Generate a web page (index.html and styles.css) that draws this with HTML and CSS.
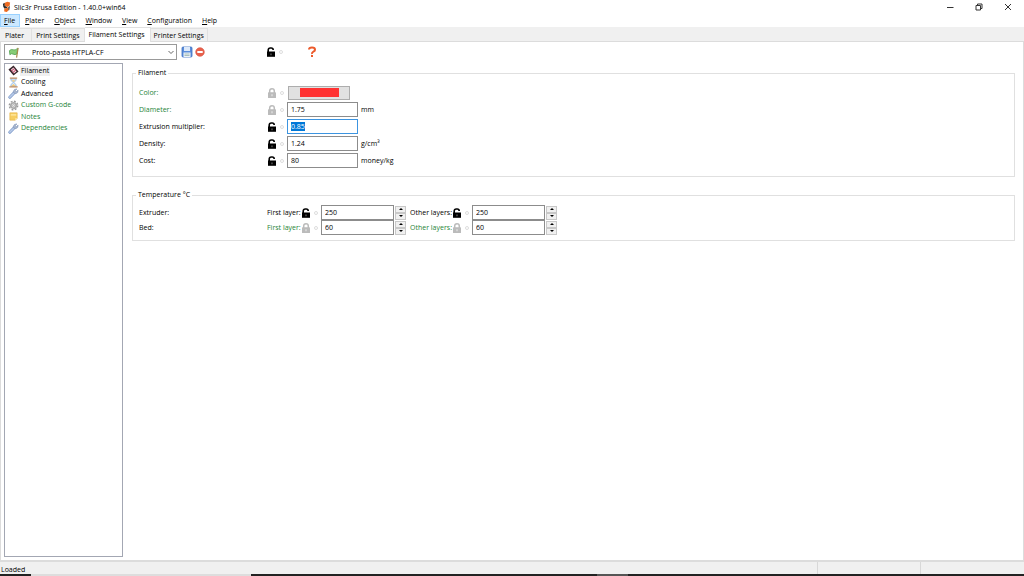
FILE: index.html
```html
<!DOCTYPE html>
<html lang="en">
<head>
<meta charset="utf-8">
<title>Slic3r Prusa Edition - 1.40.0+win64</title>
<link rel="stylesheet" href="styles.css">
</head>
<body>
<svg class="sprite" aria-hidden="true">
  <symbol id="unlocked" viewBox="0 0 10 10">
    <path d="M2.2 5V3.2Q2.2 1 4.4 1H5.200Q7.2 1 7.2 3" fill="none" stroke="#000" stroke-width="1.6"/>
    <path d="M1 4.500H9V9.800H1Z" fill="#000"/><path d="M4.6 6.400H5.4V8.200H4.6Z" fill="#999"/>
  </symbol>
  <symbol id="locked" viewBox="0 0 10 10">
    <path d="M2.7 5V3Q2.7 .8 5 .8T7.3 3V5" fill="none" stroke="#bbb" stroke-width="1.5"/>
    <rect x="1" y="4.2" width="8" height="5.8" rx=".6" fill="#bbb"/><path d="M4.5 6.2H5.5V8.2H4.5Z" fill="#eee"/>
  </symbol>
  <symbol id="wrench" viewBox="0 0 12 12">
    <path d="M2 10L7 5" stroke="#6f8fc4" stroke-width="3.2" stroke-linecap="round"/>
    <path d="M2 10L7 5" stroke="#b9cbe8" stroke-width="1.8" stroke-linecap="round"/>
    <path d="M9.8 1L8 2.7L9.2 4L11 2.3Q11.5 5.5 8.6 6.2Q5.6 6.2 5.8 3.6Q6.5 .8 9.8 1Z" fill="#a9b8d0" stroke="#7990b5" stroke-width=".6"/>
  </symbol>
</svg>

<header class="titlebar">
  <svg class="logo" viewBox="0 0 10 12"><path d="M2.500 1.500L6 .3L9 1L8.500 4.500L6 6L3 4.500Z" fill="#ed6b21"/><path d="M1 2.500L3 1.500L3 4.500L6.500 6.500L3 8L1.500 6Z" fill="#2b2b2b"/><path d="M2.500 8L7 6.500L7.500 9L5.500 11.500L2.500 11Z" fill="#ed6b21"/><path d="M7 6L8.800 5L8 9.500L7.300 10Z" fill="#333"/></svg>
  <h1>Slic3r Prusa Edition - 1.40.0+win64</h1>
  <div class="window-buttons">
    <button aria-label="Minimize"><svg viewBox="0 0 8 8"><path d="M1 4.5H7.500"/></svg></button>
    <button aria-label="Restore"><svg viewBox="0 0 8 8"><path d="M1 2.500H5.500V7H1ZM2.500 2.500V1H7V5.500H5.500"/></svg></button>
    <button aria-label="Close"><svg viewBox="0 0 8 8"><path d="M1 1L7 7M7 1L1 7"/></svg></button>
  </div>
</header>

<nav class="menubar" aria-label="Main menu">
  <button class="open"><u>F</u>ile</button>
  <button><u>P</u>later</button>
  <button><u>O</u>bject</button>
  <button><u>W</u>indow</button>
  <button><u>V</u>iew</button>
  <button><u>C</u>onfiguration</button>
  <button><u>H</u>elp</button>
</nav>

<div class="tabs" role="tablist">
  <button role="tab" class="tab-plater">Plater</button>
  <button role="tab">Print Settings</button>
  <button role="tab" class="selected" aria-selected="true">Filament Settings</button>
  <button role="tab">Printer Settings</button>
</div>

<main class="page">
  <div class="toolbar">
    <div class="preset">
      <svg class="flag" viewBox="0 0 12 12"><path d="M1 4Q3 2 5 3T10 1.500L9.300 7.500Q7 9 5 7.800T1.500 8.500Z" fill="#86cc76" stroke="#4c9d4b" stroke-width=".8"/><path d="M10.500 1L8.800 11.500" stroke="#a88a4a" stroke-width="1.300"/></svg>
      <select aria-label="Filament preset"><option>Proto-pasta HTPLA-CF</option></select>
      <svg class="chevron" viewBox="0 0 8 8"><path d="M1.500 3L4 5.500L6.500 3" fill="none" stroke="#555" stroke-width=".9"/></svg>
    </div>
    <button class="tool" aria-label="Save preset"><svg viewBox="0 0 12 12"><rect x="1" y="1" width="10" height="10" rx="1" fill="#5b8edb" stroke="#3d6fc0" stroke-width=".8"/><rect x="3" y="1" width="6" height="4" fill="#dce9fa"/><rect x="2.500" y="6.500" width="7" height="4.500" fill="#edf3fa"/><path d="M3.500 8H8.500M3.500 9.500H8.500" stroke="#8ba9a0" stroke-width=".7"/></svg></button>
    <button class="tool" aria-label="Delete preset"><svg viewBox="0 0 12 12"><circle cx="6" cy="6" r="4.300" fill="#e8614c" stroke="#d64f3d" stroke-width=".6"/><rect x="3.300" y="5" width="5.400" height="2" fill="#fff"/></svg></button>
    <div class="toolbar-locks"><svg class="lock"><use href="#unlocked"/></svg><i class="dot"></i></div>
    <button class="help" aria-label="Help"><svg viewBox="0 0 10 12"><path d="M2 3.500Q2 1.500 5 1.500T8 3.700Q8 4.900 6.400 5.700T5 8" fill="none" stroke="#ec5a2b" stroke-width="2"/><rect x="4" y="9" width="2" height="2" fill="#ec5a2b"/></svg></button>
  </div>

  <div class="workspace">
    <nav class="tree" aria-label="Filament settings pages">
      <ul>
        <li class="current"><svg viewBox="0 0 12 12"><path d="M.5 5L6 .5L11.500 7L6 11.500Z" fill="#3a262c"/><path d="M3.200 5L6 2.700L9.300 7L6.500 9.300Z" fill="#f6dfe5"/><path d="M3.800 6.500L7 4M5.200 8.200L8.500 5.500" stroke="#c4486a" stroke-width="1.100"/></svg><a href="#filament">Filament</a></li>
        <li><svg viewBox="0 0 12 12"><path d="M3 2H9Q9 4 6.500 6Q9 8 9 10H3Q3 8 5.500 6Q3 4 3 2Z" fill="#dceafa" stroke="#8cb4e0" stroke-width=".9"/><path d="M4 3.500H8L6 5.500ZM3.500 9.800L6 7.700L8.500 9.800Z" fill="#f0c878"/><path d="M2 1.300H10M1.500 10.700H10.500" stroke="#c08a5c" stroke-width="1.300"/></svg><a href="#cooling">Cooling</a></li>
        <li><svg><use href="#wrench"/></svg><a href="#advanced">Advanced</a></li>
        <li class="system"><svg viewBox="0 0 12 12"><circle cx="6" cy="6" r="4.600" fill="none" stroke="#999" stroke-width="1.500" stroke-dasharray="2 1.600"/><circle cx="6" cy="6" r="3" fill="#ddd" stroke="#aaa" stroke-width="1.900"/><circle cx="6" cy="6" r="1" fill="#fff" stroke="#888" stroke-width=".5"/></svg><a href="#gcode">Custom G-code</a></li>
        <li class="system"><svg viewBox="0 0 12 12"><path d="M2 2H10V8L8 10H2Z" fill="#f7ce61" stroke="#e6b54e" stroke-width=".7"/><path d="M3 3.500H9V5H3Z" fill="#ffe9a2"/><path d="M10 8H8V10Z" fill="#fff0b8"/></svg><a href="#notes">Notes</a></li>
        <li class="system"><svg><use href="#wrench"/></svg><a href="#dependencies">Dependencies</a></li>
      </ul>
    </nav>

    <form class="settings">
      <fieldset class="filament">
        <legend>Filament</legend>
        <div class="row system"><label for="color">Color:</label><svg class="lock"><use href="#locked"/></svg><i class="dot"></i><button type="button" id="color" class="swatch" aria-label="Color"><span></span></button></div>
        <div class="row system"><label for="diameter">Diameter:</label><svg class="lock"><use href="#locked"/></svg><i class="dot"></i><input id="diameter" value="1.75"><span class="unit">mm</span></div>
        <div class="row"><label for="multiplier">Extrusion multiplier:</label><svg class="lock"><use href="#unlocked"/></svg><i class="dot"></i><input id="multiplier" value="0.85"></div>
        <div class="row"><label for="density">Density:</label><svg class="lock"><use href="#unlocked"/></svg><i class="dot"></i><input id="density" value="1.24"><span class="unit">g/cm³</span></div>
        <div class="row"><label for="cost">Cost:</label><svg class="lock"><use href="#unlocked"/></svg><i class="dot"></i><input id="cost" value="80"><span class="unit">money/kg</span></div>
      </fieldset>

      <fieldset class="temperature">
        <legend>Temperature °C</legend>
        <div class="temp-row">
          <span>Extruder:</span>
          <label for="ext-first">First layer:</label><svg class="lock"><use href="#unlocked"/></svg><i class="dot"></i>
          <input id="ext-first" value="250"><div class="spin"><button type="button" aria-label="Increase"></button><button type="button" aria-label="Decrease"></button></div>
          <label for="ext-other">Other layers:</label><svg class="lock"><use href="#unlocked"/></svg><i class="dot"></i>
          <input id="ext-other" value="250"><div class="spin"><button type="button" aria-label="Increase"></button><button type="button" aria-label="Decrease"></button></div>
        </div>
        <div class="temp-row system">
          <span>Bed:</span>
          <label for="bed-first">First layer:</label><svg class="lock"><use href="#locked"/></svg><i class="dot"></i>
          <input id="bed-first" value="60"><div class="spin"><button type="button" aria-label="Increase"></button><button type="button" aria-label="Decrease"></button></div>
          <label for="bed-other">Other layers:</label><svg class="lock"><use href="#locked"/></svg><i class="dot"></i>
          <input id="bed-other" value="60"><div class="spin"><button type="button" aria-label="Increase"></button><button type="button" aria-label="Decrease"></button></div>
        </div>
      </fieldset>
    </form>
  </div>
</main>

<footer class="statusbar"><span>Loaded</span><span></span><span></span></footer>
<div class="taskbar-edge"></div>
<script src="script.js"></script>
</body>
</html>
```
FILE: styles.css
```css
* { box-sizing: border-box; }
body {
  margin: 0;
  height: 100vh;
  display: flex;
  flex-direction: column;
  background: #fff;
  color: #000;
  font: 7px/10px "Open Sans", "Noto Sans", sans-serif;
}
button, input, select { font: inherit; color: inherit; margin: 0; padding: 0; border: 0; background: none; }
svg { display: block; flex: none; }
a { color: inherit; text-decoration: none; }
.sprite { position: absolute; width: 0; height: 0; }

.titlebar { display: flex; align-items: center; height: 14px; padding-left: 2px; }
.logo { width: 9px; height: 12px; }
h1 { flex: 1; margin: 0 0 0 3px; padding-top: 1px; font-size: 7px; font-weight: 400; }
.window-buttons { display: flex; padding-right: 2px; }
.window-buttons button { width: 29px; height: 14px; display: grid; place-items: center; }
.window-buttons svg { width: 8px; height: 8px; fill: none; stroke: #333; stroke-width: 1; }

.menubar { display: flex; height: 13px; }
.menubar button { padding: 1px 5px 0; }
.menubar .open { padding-left: 4px; background: #cce8ff; box-shadow: inset 0 0 0 1px #99d1ff; }

.tabs { display: flex; align-items: flex-end; height: 15px; padding-left: 1px; background: #f0f0f0; border-bottom: 1px solid #dcdcdc; }
.tabs button { height: 13px; padding: 1px 4px 0; border: 1px solid #e0e0e0; border-width: 1px 1px 0 0; white-space: nowrap; }
.tabs .tab-plater { padding: 1px 7px 0 4px; }
.tabs .selected { height: 15px; margin-bottom: -1px; background: #fff; padding: 0 5px 1px 4px; }
.tabs .selected + button { padding: 1px 3px 0; }

.page { flex: 1; min-height: 0; display: flex; flex-direction: column; border: 1px solid #dcdcdc; border-top: 0; padding: 2px 8px 3px 3px; }
.toolbar { display: flex; align-items: center; height: 16px; }
.preset { position: relative; display: flex; align-items: center; width: 173px; height: 16px; border: 1px solid #999; }
.flag { position: absolute; left: 3px; width: 12px; height: 11px; pointer-events: none; }
.chevron { position: absolute; right: 1px; width: 8px; height: 8px; pointer-events: none; }
.preset select { appearance: none; width: 100%; height: 14px; padding: 1px 0 0 27px; }
.tool { padding-left: 4px; }
.tool svg { width: 12px; height: 12px; }
.tool + .tool { padding-left: 1px; }
.toolbar-locks { display: flex; align-items: center; margin-left: 60px; }
.lock { width: 10px; height: 10px; }
.dot { flex: none; width: 4px; height: 4px; border: 1px solid #ddd; border-radius: 50%; margin: 0 3px; }
.help { margin-left: 21px; }
.help svg { width: 10px; height: 12px; }

.workspace { flex: 1; min-height: 0; display: flex; gap: 9px; padding-top: 3px; }
.tree { flex: none; width: 119px; border: 1px solid #a3a7b3; padding-top: 1px; }
.tree ul { display: grid; grid-auto-rows: 1fr; height: 69px; margin: 0; padding: 0 0 0 3px; list-style: none; }
.tree li { display: flex; align-items: center; gap: 1px; }
.tree li svg { width: 11px; height: 11px; }
.tree a { padding: 0 1px; }
.tree .current a { background: #f0f0f0; }
.system, .tree .system { color: #1e8437; }

.settings { flex: 1; min-width: 0; display: flex; flex-direction: column; gap: 13px; padding-top: 5px; }
fieldset { min-width: 0; margin: 0; border: 1px solid #e0e0e0; padding: 6px 6px 7px; }
legend { color: #000; margin-left: -3px; padding: 0 2px; }
.row { display: flex; align-items: center; height: 17px; }
.row label { width: 128px; }
.row input { width: 71px; }
input { height: 15px; border: 1px solid #8c8c8c; padding: 0 3px; background: #fff; color: #000; }
input:focus { outline: 0; border-color: #3c94e0; }
input::selection { background: #0078d7; color: #fff; }
.unit { margin-left: 3px; color: #000; }
.swatch { width: 62px; height: 14px; margin-left: 1px; border: 1px solid #adadad; background: #e1e1e1; display: grid; place-items: center; }
.swatch span { width: 39px; height: 9px; background: #ff3232; }

.temperature { padding: 5px 6px; }
.temp-row { display: grid; grid-template-columns: 128px 34px 10px 10px 73px 12px 46px 10px 10px 73px 12px; align-items: center; height: 15px; }
.temp-row > span { color: #000; }
.temp-row label { white-space: nowrap; }
.temp-row .spin + label { padding-left: 4px; }
.spin { display: grid; grid-template-rows: 1fr 1fr; width: 11px; height: 14px; margin-left: 1px; }
.spin button { border: 1px solid #c8c8c8; background: #f0f0f0; display: grid; place-items: center; }
.spin button::before { content: ""; border: 2px solid transparent; border-top: 0; border-bottom-color: #000; }
.spin button + button::before { border-top: 2px solid #000; border-bottom: 0; }

.statusbar { display: grid; grid-template-columns: 1fr 103px 104px; height: 13px; background: #f0f0f0; border-top: 1px solid #dcdcdc; }
.statusbar span { padding: 3px 1px 0; line-height: 9px; }
.statusbar span + span { border-left: 1px solid #d8d8d8; }
.taskbar-edge { height: 2px; background: linear-gradient(to right, #222 31px, #ddd 31px 251px, #222 251px 597px, #555 597px 628px, #222 628px); }
```
FILE: script.js
```js
const multiplier = document.getElementById("multiplier");
multiplier.focus();
multiplier.select();
```
